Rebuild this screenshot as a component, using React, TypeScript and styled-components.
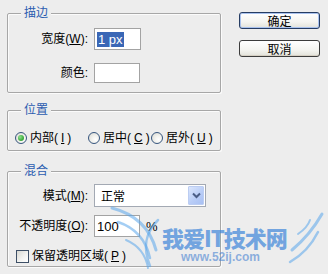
import React from "react";
import styled, { createGlobalStyle } from "styled-components";

const Global = createGlobalStyle`
  html, body { margin: 0; padding: 0; background: #ededed; }
  body {
    font-family: "Liberation Sans", "Noto Sans CJK SC", sans-serif;
    font-size: 12px;
    color: #000;
  }
`;

const Dialog = styled.div`
  position: relative;
  width: 328px;
  height: 274px;
  box-sizing: border-box;
  padding-left: 7px;
  display: flex;
  gap: 18px;
  overflow: hidden;
  background: #ededed;
`;

const Left = styled.div`
  width: 214px;
  display: flex;
  flex-direction: column;
`;

const Group = styled.section<{ $mt: number }>`
  margin-top: ${(p) => p.$mt}px;
  border: 1px solid #a7a7a7;
  box-shadow: inset 1px 1px 0 #fbfbfb, 1px 1px 0 #fbfbfb;
  border-radius: 2px;
`;

const Title = styled.div`
  margin: -8px 0 0 13px;
  width: fit-content;
  padding: 0 3px;
  background: #ededed;
  color: #2b5cb0;
  line-height: 14px;
  font-size: 12px;
`;

const FieldGrid = styled.div<{ $pt: number; $pb: number; $gap: number }>`
  display: grid;
  grid-template-columns: 80px auto;
  column-gap: 6px;
  row-gap: ${(p) => p.$gap}px;
  align-items: center;
  padding: ${(p) => p.$pt}px 0 ${(p) => p.$pb}px 0;
`;

const Label = styled.label`
  text-align: right;
  white-space: nowrap;
  line-height: 14px;
`;

const U = styled.span`
  text-decoration: underline;
`;

const FieldCell = styled.div`
  display: flex;
  align-items: center;
`;

const TextBox = styled.div<{ $w: number; $h: number }>`
  width: ${(p) => p.$w}px;
  height: ${(p) => p.$h}px;
  box-sizing: border-box;
  border: 1px solid #a3a3a3;
  background: #fff;
  display: flex;
  align-items: center;
  padding-left: 2px;
  font-size: 13px;
`;

const Selected = styled.span`
  background: #3a67b6;
  color: #fff;
  line-height: 15px;
  padding: 0 1px;
`;

const Percent = styled.span`
  margin-left: 6px;
  font-size: 13px;
`;

const SelectBox = styled.div`
  width: 112px;
  height: 23px;
  box-sizing: border-box;
  border: 1px solid #a3a9b3;
  background: #fff;
  display: flex;
  align-items: center;
`;

const SelectValue = styled.span`
  flex: 1;
  padding-left: 6px;
  font-size: 12px;
`;

const DropButton = styled.div`
  width: 16px;
  height: 19px;
  margin-right: 1px;
  box-sizing: border-box;
  border: 1px solid #bccdf2;
  border-radius: 1px;
  background: linear-gradient(135deg, #dbe6fc 0%, #b9cdf7 55%, #a8c0f3 100%);
  display: flex;
  align-items: center;
  justify-content: center;
`;

const RadioRow = styled.div`
  display: flex;
  align-items: center;
  height: 14px;
  padding: 14px 0 5px 7px;
`;

const RadioItem = styled.div<{ $w?: number }>`
  display: flex;
  align-items: center;
  gap: 3px;
  ${(p) => (p.$w ? `width: ${p.$w}px;` : "")}
  line-height: 14px;
  white-space: nowrap;
`;

const RadioCircle = styled.span<{ $on?: boolean }>`
  width: 12px;
  height: 12px;
  box-sizing: border-box;
  border-radius: 50%;
  border: 1px solid #36557e;
  background: radial-gradient(circle at 65% 65%, #ffffff 0%, #f2f2ee 40%, #d6d6cf 100%);
  display: flex;
  align-items: center;
  justify-content: center;
  &::after {
    content: "";
    display: ${(p) => (p.$on ? "block" : "none")};
    width: 6px;
    height: 6px;
    border-radius: 50%;
    background: radial-gradient(circle at 35% 35%, #8fe08f 0%, #3fae3f 60%, #2a8f2a 100%);
  }
`;

const CheckRow = styled.div`
  grid-column: 1 / span 2;
  display: flex;
  align-items: center;
  gap: 3px;
  padding-left: 8px;
  margin-top: 4px;
  line-height: 14px;
`;

const CheckBox = styled.span`
  width: 13px;
  height: 13px;
  box-sizing: border-box;
  border: 1px solid #3d4f66;
  background: linear-gradient(135deg, #d8d8d2 0%, #f4f4f2 60%, #ffffff 100%);
`;

const Right = styled.div`
  display: flex;
  flex-direction: column;
  gap: 11px;
  padding-top: 12px;
`;

const Button = styled.button<{ $default?: boolean }>`
  width: 81px;
  height: 17px;
  box-sizing: border-box;
  padding: 0;
  border-radius: 3px;
  border: 1px solid ${(p) => (p.$default ? "#263d63" : "#3c3c3c")};
  background: linear-gradient(#ffffff 0%, #f4f4f0 60%, #e2e2da 100%);
  box-shadow: ${(p) =>
    p.$default ? "inset 0 0 0 1px #a9c2ee" : "inset 0 -1px 0 #d6d0c4"};
  font-family: "Noto Sans CJK SC", sans-serif;
  font-size: 12px;
  line-height: 14px;
  color: #000;
`;

const Watermark = styled.div`
  position: absolute;
  left: 0;
  top: 0;
  width: 328px;
  height: 274px;
  pointer-events: none;
`;

const WmTitle = styled.div`
  position: absolute;
  left: 162px;
  top: 226px;
  font-family: "Noto Sans CJK SC", sans-serif;
  font-weight: 900;
  font-size: 22px;
  line-height: 22px;
  letter-spacing: -1px;
  color: rgba(66, 136, 218, 0.72);
`;

const WmUrl = styled.div`
  position: absolute;
  left: 181px;
  top: 251px;
  font-family: "Liberation Sans", sans-serif;
  font-weight: bold;
  font-size: 12px;
  line-height: 13px;
  color: rgba(70, 130, 210, 0.6);
`;

const WmArt = styled.svg`
  position: absolute;
  left: 0;
  top: 0;
`;

export default function App() {
  return (
    <>
      <Global />
      <Dialog>
        <Left>
          <Group $mt={13}>
            <Title>描边</Title>
            <FieldGrid $pt={8} $pb={9} $gap={13}>
              <Label>
                宽度(<U>W</U>):
              </Label>
              <FieldCell>
                <TextBox $w={47} $h={22}>
                  <Selected>1 px</Selected>
                </TextBox>
              </FieldCell>
              <Label>颜色:</Label>
              <FieldCell>
                <TextBox $w={46} $h={20} />
              </FieldCell>
            </FieldGrid>
          </Group>

          <Group $mt={17}>
            <Title>位置</Title>
            <RadioRow>
              <RadioItem $w={73}>
                <RadioCircle $on />
                内部(<U>I</U>)
              </RadioItem>
              <RadioItem $w={63}>
                <RadioCircle />
                居中(<U>C</U>)
              </RadioItem>
              <RadioItem>
                <RadioCircle />
                居外(<U>U</U>)
              </RadioItem>
            </RadioRow>
          </Group>

          <Group $mt={20}>
            <Title>混合</Title>
            <FieldGrid $pt={6} $pb={3} $gap={8}>
              <Label>
                模式(<U>M</U>):
              </Label>
              <FieldCell>
                <SelectBox>
                  <SelectValue>正常</SelectValue>
                  <DropButton>
                    <svg width="9" height="7" viewBox="0 0 9 7">
                      <path d="M1 1.5 L4.5 5 L8 1.5" fill="none" stroke="#4a5d86" strokeWidth="2" />
                    </svg>
                  </DropButton>
                </SelectBox>
              </FieldCell>
              <Label>
                不透明度(<U>O</U>):
              </Label>
              <FieldCell>
                <TextBox $w={46} $h={22}>100</TextBox>
                <Percent>%</Percent>
              </FieldCell>
              <CheckRow>
                <CheckBox />
                保留透明区域(<U>P</U>)
              </CheckRow>
            </FieldGrid>
          </Group>
        </Left>

        <Right>
          <Button $default>确定</Button>
          <Button>取消</Button>
        </Right>

        <Watermark>
          <WmArt width="328" height="274" viewBox="0 0 328 274">
            <g fill="none" stroke="rgba(90,165,235,0.55)" strokeLinecap="round">
              <path d="M112 208 C135 214 150 228 156 250" strokeWidth="3" />
              <path d="M118 222 C136 228 146 240 150 258" strokeWidth="2.5" />
              <path d="M126 240 C140 246 146 256 148 268" strokeWidth="2" />
              <path d="M158 220 C146 232 142 246 150 266" strokeWidth="2.5" />
              <path d="M292 250 C304 240 314 228 322 214" strokeWidth="3" />
              <path d="M290 262 C304 254 312 244 318 232" strokeWidth="2.5" />
              <path d="M298 234 C304 230 308 226 310 220" strokeWidth="2" />
            </g>
          </WmArt>
          <WmTitle>我爱IT技术网</WmTitle>
          <WmUrl>www.52ij.com</WmUrl>
        </Watermark>
      </Dialog>
    </>
  );
}
